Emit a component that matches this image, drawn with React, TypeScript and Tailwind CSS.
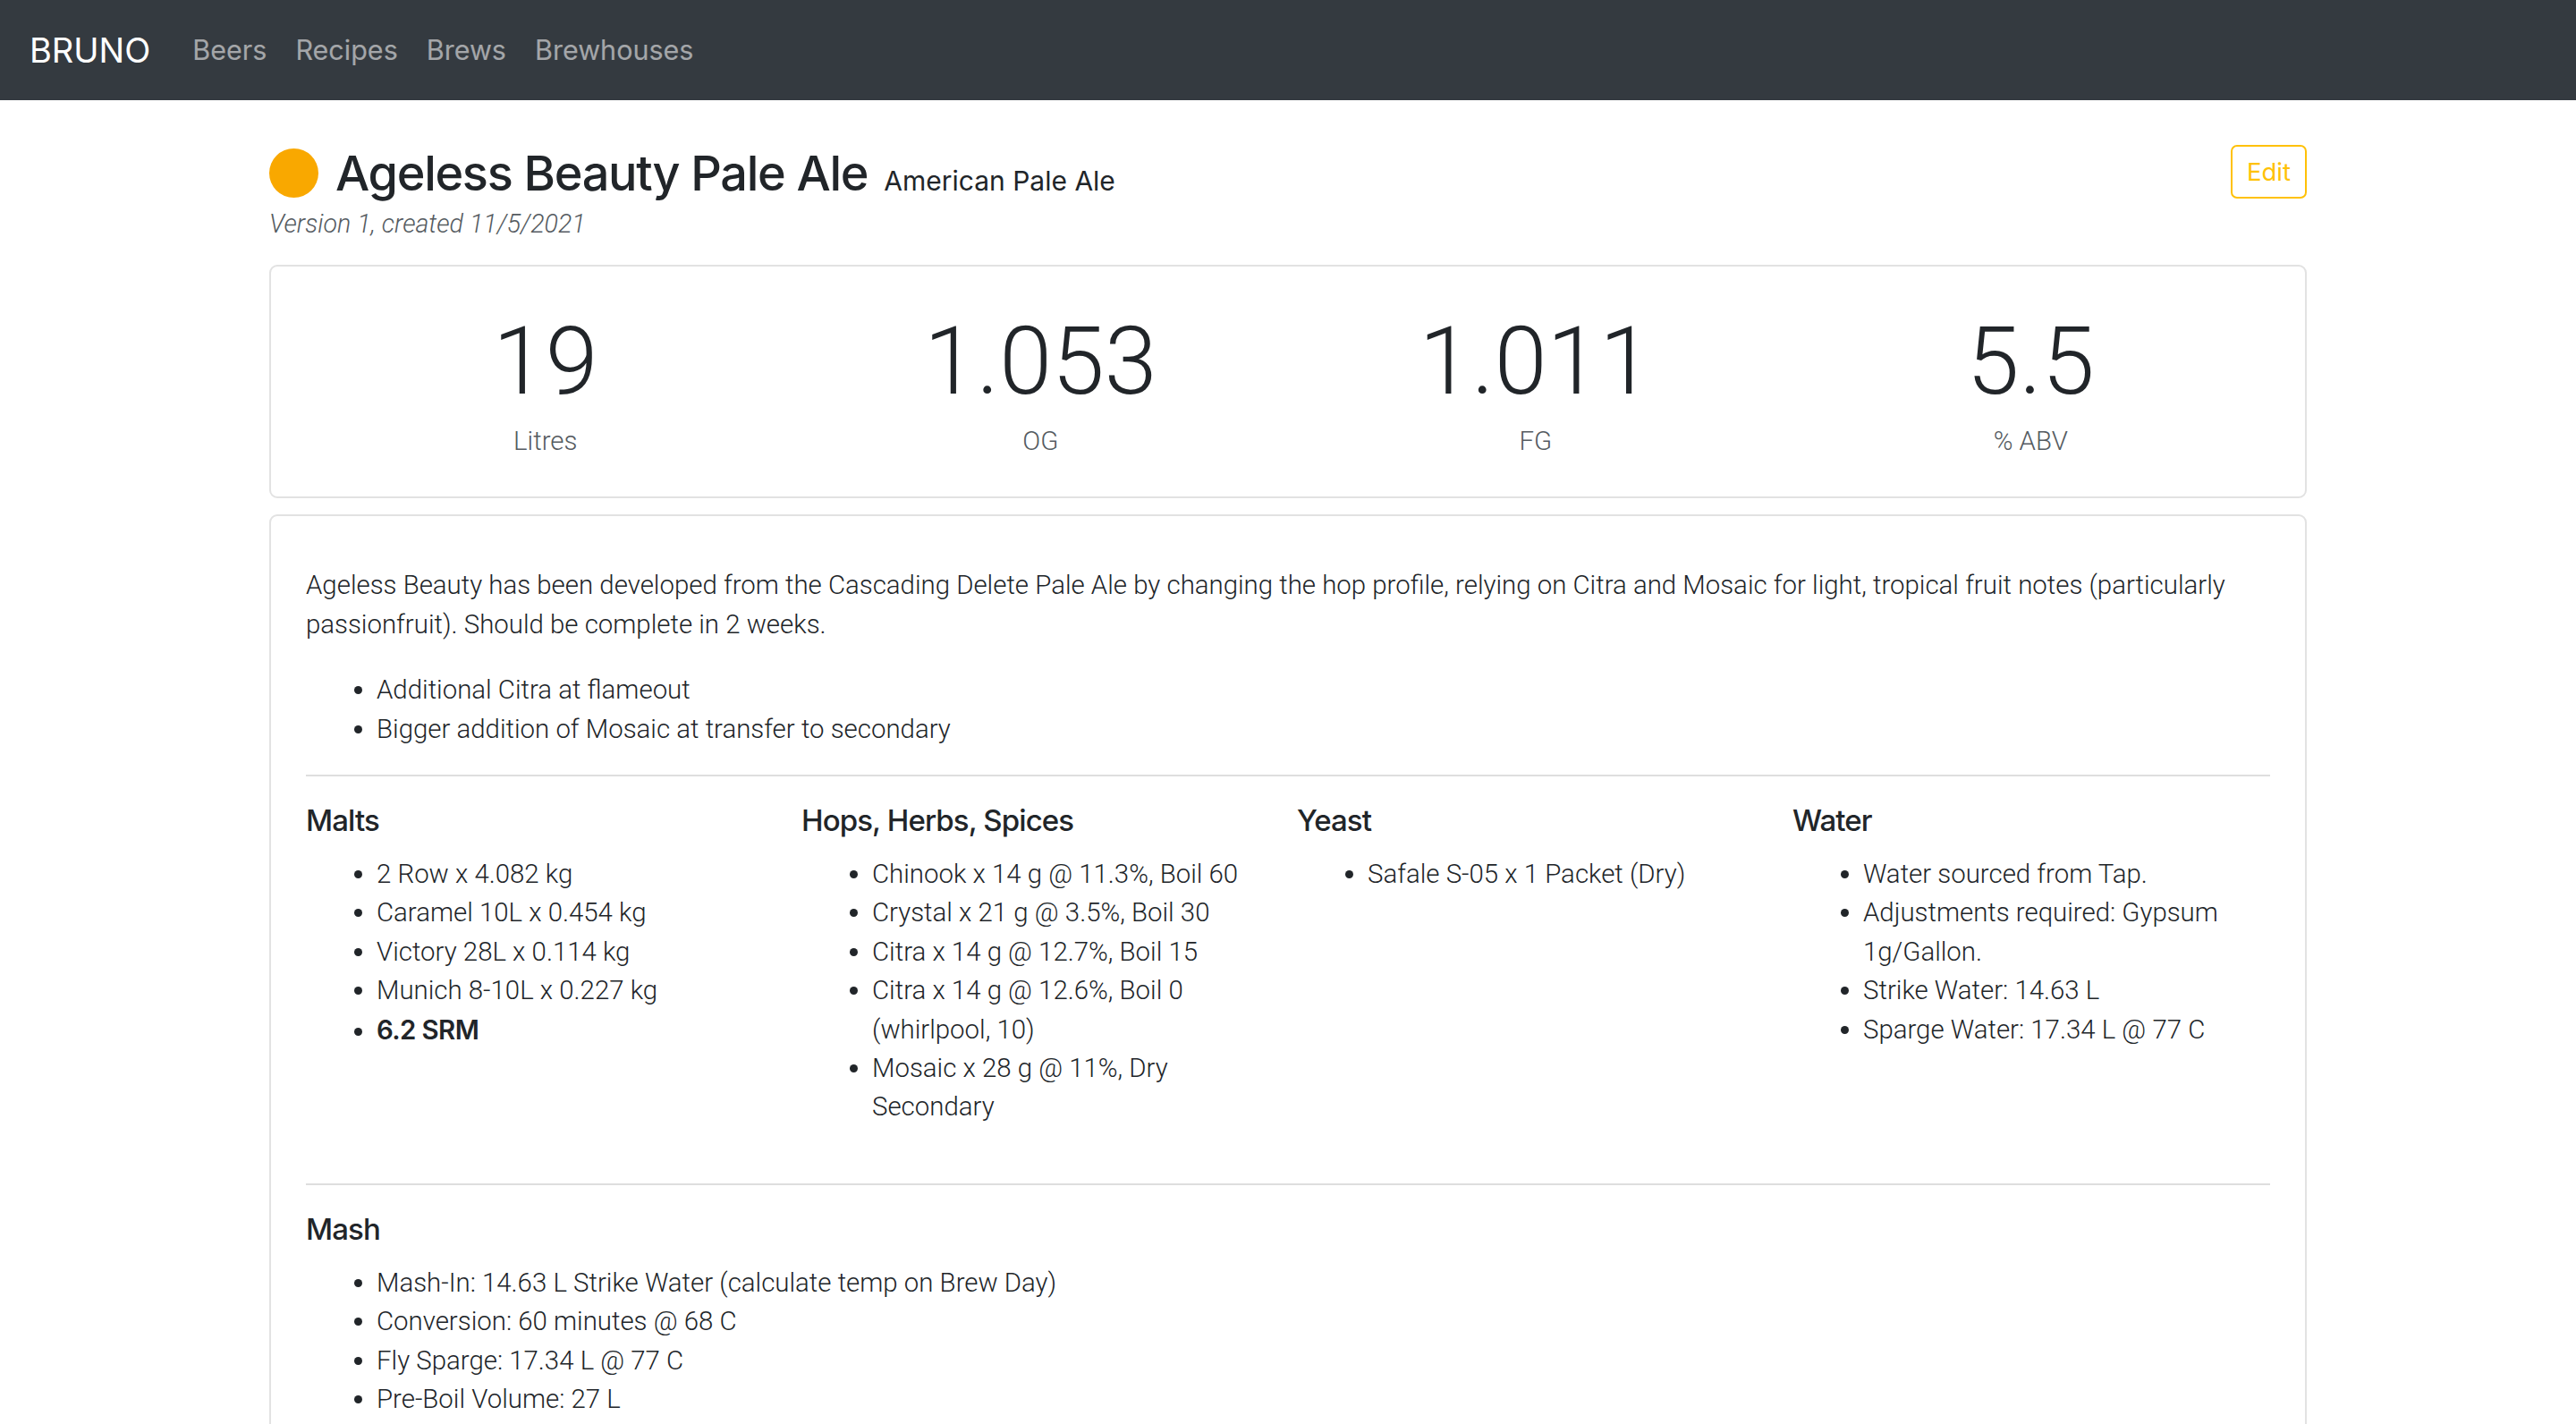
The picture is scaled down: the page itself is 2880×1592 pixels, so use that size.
import React from 'react';

const malts = ['2 Row x 4.082 kg', 'Caramel 10L x 0.454 kg', 'Victory 28L x 0.114 kg', 'Munich 8-10L x 0.227 kg'];
const hops = [
  'Chinook x 14 g @ 11.3%, Boil 60',
  'Crystal x 21 g @ 3.5%, Boil 30',
  'Citra x 14 g @ 12.7%, Boil 15',
  'Citra x 14 g @ 12.6%, Boil 0 (whirlpool, 10)',
  'Mosaic x 28 g @ 11%, Dry Secondary',
];
const yeast = ['Safale S-05 x 1 Packet (Dry)'];
const water = ['Water sourced from Tap.', 'Adjustments required: Gypsum 1g/Gallon.', 'Strike Water: 14.63 L', 'Sparge Water: 17.34 L @ 77 C'];
const mash = [
  'Mash-In: 14.63 L Strike Water (calculate temp on Brew Day)',
  'Conversion: 60 minutes @ 68 C',
  'Fly Sparge: 17.34 L @ 77 C',
  'Pre-Boil Volume: 27 L',
];

const stats = [
  { value: '19', label: 'Litres' },
  { value: '1.053', label: 'OG' },
  { value: '1.011', label: 'FG' },
  { value: '5.5', label: '% ABV' },
];

// light text uses Roboto Light, headings stay on Inter
const light = "font-['Roboto','Liberation_Sans',sans-serif] font-light";

function Section({ title, items, children }: { title: string; items: string[]; children?: React.ReactNode }) {
  return (
    <div>
      <h5 className="mb-[19px] text-[33px] font-medium leading-[40px] tracking-[-0.9px]">{title}</h5>
      <ul className={`mb-[29px] list-disc pl-[79px] leading-[43.4px] ${light}`}>
        {items.map((item, i) => (
          <li key={i}>{item}</li>
        ))}
        {children}
      </ul>
    </div>
  );
}

export default function App() {
  return (
    <div className="min-h-screen bg-white font-['Inter','Liberation_Sans',sans-serif] text-[29.4px] leading-[44px] text-[#212529]">
      {/* navbar */}
      <nav className="flex h-[112px] items-center bg-[#343a40] px-[33px]">
        <span className="mr-[47px] text-[38px] text-white">BRUNO</span>
        <div className="flex gap-[32px] text-[30.5px] text-white/55">
          <a>Beers</a>
          <a>Recipes</a>
          <a>Brews</a>
          <a>Brewhouses</a>
        </div>
      </nav>

      <main className="mx-auto w-[2278px] pt-[49px]">
        {/* header */}
        <div className="flex items-start justify-between">
          <div>
            <div className="flex items-center">
              <span className="mr-[19px] h-[55px] w-[55px] rounded-full bg-[#f9a800]" />
              <div className="flex items-baseline">
                <h2 className="text-[54px] font-medium leading-[65px] tracking-[-1.3px]">Ageless Beauty Pale Ale</h2>
                <span className="ml-[18px] text-[30px]">American Pale Ale</span>
              </div>
            </div>
            <div className={`mt-[3px] text-[28.6px] italic leading-[42px] text-[#555b61] ${light}`}>
              Version 1, created 11/5/2021
            </div>
          </div>
          <button className="mt-px h-[60px] w-[85px] rounded-[7px] border-2 border-[#ffc107] text-[27.5px] text-[#ffc107]">
            Edit
          </button>
        </div>

        {/* stats */}
        <div className="mt-[25px] grid grid-cols-4 rounded-[9px] border-2 border-[#e2e2e2] px-[30px] pb-[40px] pt-[44px]">
          {stats.map((s) => (
            <div key={s.label} className={`flex flex-col items-center ${light}`}>
              <div className="text-[106px] leading-[124px]">{s.value}</div>
              <div className="mt-[5px] text-[#555b61]">{s.label}</div>
            </div>
          ))}
        </div>

        {/* details */}
        <div className="mt-[18px] rounded-[9px] border-2 border-[#e2e2e2] px-[39px] pb-[40px] pt-[55px]">
          <p className={`mb-[29px] ${light}`}>
            Ageless Beauty has been developed from the Cascading Delete Pale Ale by changing the hop profile, relying on Citra
            and Mosaic for light, tropical fruit notes (particularly passionfruit). Should be complete in 2 weeks.
          </p>
          <ul className={`mb-[29px] list-disc pl-[79px] ${light}`}>
            <li>Additional Citra at flameout</li>
            <li>Bigger addition of Mosaic at transfer to secondary</li>
          </ul>
          <hr className="mb-[29px] border-t-2 border-[#dedede]" />

          <div className="grid grid-cols-[repeat(4,512px)] gap-x-[42px]">
            <Section title="Malts" items={malts}>
              <li className="font-['Inter',sans-serif] font-semibold tracking-[-0.6px]">6.2 SRM</li>
            </Section>
            <Section title="Hops, Herbs, Spices" items={hops} />
            <Section title="Yeast" items={yeast} />
            <Section title="Water" items={water} />
          </div>

          <hr className="mb-[29px] mt-[34px] border-t-2 border-[#dedede]" />
          <Section title="Mash" items={mash} />
        </div>
      </main>
    </div>
  );
}
